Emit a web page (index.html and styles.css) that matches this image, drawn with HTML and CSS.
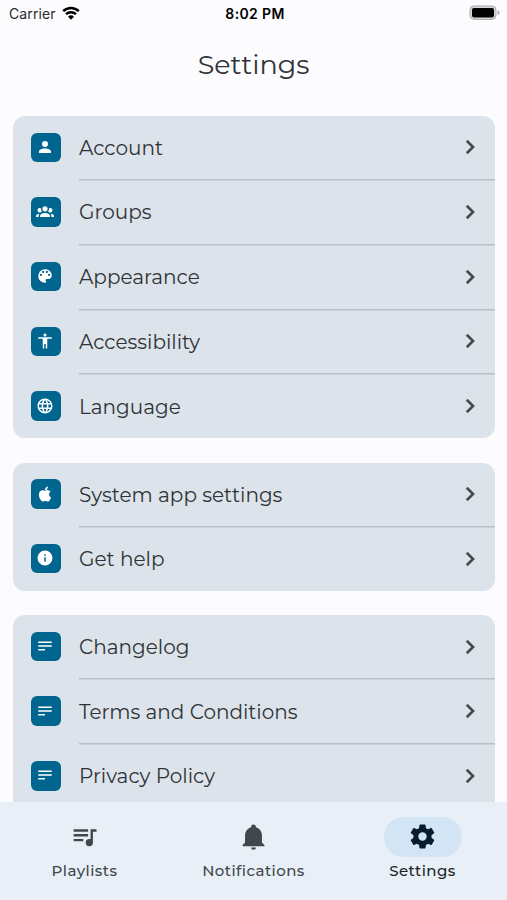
FILE: index.html
```html
<!DOCTYPE html>
<html lang="en">
<head>
    <meta charset="UTF-8">
    <meta name="viewport" content="width=device-width, initial-scale=1.0">
    <title>Settings</title>
    <link rel="stylesheet" href="styles.css">
</head>
<body>
    <div class="app">
        <header class="status-bar">
            <div class="carrier">
                <span>Carrier</span>
                <svg class="wifi" viewBox="0 0 18 14">
                    <path d="M1.2 5.2A11.2 11.2 0 0 1 16.8 5.2M4 8.2A7.1 7.1 0 0 1 14 8.2" fill="none" stroke="#000" stroke-width="2.5"/>
                    <path d="M9 13.8L6 10.7A4.3 4.3 0 0 1 12 10.7Z"/>
                </svg>
            </div>
            <span class="time">8:02 PM</span>
            <svg class="battery" viewBox="0 0 32 16">
                <rect x="1" y="1" width="26" height="13.4" rx="4" fill="#d8d8da" stroke="#a9a9ab"/>
                <rect x="3" y="3" width="22" height="9.5" rx="2"/>
                <path d="M28.6 5.2Q30.6 6 30.6 7.7T28.6 10.2Z" fill="#a9a9ab"/>
            </svg>
        </header>

        <h1 class="title">Settings</h1>

        <main class="content">
            <section class="card">
                <a class="row">
                    <span class="icon"><svg viewBox="0 0 24 24"><path d="M12,4A4,4 0 0,1 16,8A4,4 0 0,1 12,12A4,4 0 0,1 8,8A4,4 0 0,1 12,4M12,14C16.42,14 20,15.79 20,18V20H4V18C4,15.79 7.58,14 12,14Z"/></svg></span>
                    <span class="label">Account</span>
                    <svg class="chevron" viewBox="0 0 24 24"><path d="M8.59,16.58L13.17,12L8.59,7.41L10,6L16,12L10,18L8.59,16.58Z"/></svg>
                </a>
                <a class="row">
                    <span class="icon"><svg viewBox="0 0 24 24"><path d="M12,5.5A3.5,3.5 0 0,1 15.5,9A3.5,3.5 0 0,1 12,12.5A3.5,3.5 0 0,1 8.5,9A3.5,3.5 0 0,1 12,5.5M5,8C5.56,8 6.08,8.15 6.53,8.42C6.38,9.85 6.8,11.27 7.66,12.38C7.16,13.34 6.16,14 5,14A3,3 0 0,1 2,11A3,3 0 0,1 5,8M19,8A3,3 0 0,1 22,11A3,3 0 0,1 19,14C17.84,14 16.84,13.34 16.34,12.38C17.2,11.27 17.62,9.85 17.47,8.42C17.92,8.15 18.44,8 19,8M5.5,18.25C5.5,16.18 8.41,14.5 12,14.5C15.59,14.5 18.5,16.18 18.5,18.25V20H5.5V18.25M0,20V18.5C0,17.11 1.89,15.94 4.45,15.6C3.86,16.28 3.5,17.22 3.5,18.25V20H0M24,20H20.5V18.25C20.5,17.22 20.14,16.28 19.55,15.6C22.11,15.94 24,17.11 24,18.5V20Z"/></svg></span>
                    <span class="label">Groups</span>
                    <svg class="chevron" viewBox="0 0 24 24"><path d="M8.59,16.58L13.17,12L8.59,7.41L10,6L16,12L10,18L8.59,16.58Z"/></svg>
                </a>
                <a class="row">
                    <span class="icon"><svg viewBox="0 0 24 24"><path d="M17.5,12A1.5,1.5 0 0,1 16,10.5A1.5,1.5 0 0,1 17.5,9A1.5,1.5 0 0,1 19,10.5A1.5,1.5 0 0,1 17.5,12M14.5,8A1.5,1.5 0 0,1 13,6.5A1.5,1.5 0 0,1 14.5,5A1.5,1.5 0 0,1 16,6.5A1.5,1.5 0 0,1 14.5,8M9.5,8A1.5,1.5 0 0,1 8,6.5A1.5,1.5 0 0,1 9.5,5A1.5,1.5 0 0,1 11,6.5A1.5,1.5 0 0,1 9.5,8M6.5,12A1.5,1.5 0 0,1 5,10.5A1.5,1.5 0 0,1 6.5,9A1.5,1.5 0 0,1 8,10.5A1.5,1.5 0 0,1 6.5,12M12,3A9,9 0 0,0 3,12A9,9 0 0,0 12,21A1.5,1.5 0 0,0 13.5,19.5C13.5,19.11 13.35,18.76 13.11,18.5C12.88,18.23 12.73,17.88 12.73,17.5A1.5,1.5 0 0,1 14.23,16H16A5,5 0 0,0 21,11C21,6.58 16.97,3 12,3Z"/></svg></span>
                    <span class="label">Appearance</span>
                    <svg class="chevron" viewBox="0 0 24 24"><path d="M8.59,16.58L13.17,12L8.59,7.41L10,6L16,12L10,18L8.59,16.58Z"/></svg>
                </a>
                <a class="row">
                    <span class="icon"><svg viewBox="0 0 24 24"><path d="M21,9H15V22H13V16H11V22H9V9H3V7H21V9M12,2A2,2 0 0,1 14,4A2,2 0 0,1 12,6C10.89,6 10,5.1 10,4C10,2.89 10.89,2 12,2Z"/></svg></span>
                    <span class="label">Accessibility</span>
                    <svg class="chevron" viewBox="0 0 24 24"><path d="M8.59,16.58L13.17,12L8.59,7.41L10,6L16,12L10,18L8.59,16.58Z"/></svg>
                </a>
                <a class="row">
                    <span class="icon"><svg viewBox="0 0 24 24"><path d="M16.36,14C16.44,13.34 16.5,12.68 16.5,12C16.5,11.32 16.44,10.66 16.36,10H19.74C19.9,10.64 20,11.31 20,12C20,12.69 19.9,13.36 19.74,14M14.59,19.56C15.19,18.45 15.65,17.25 15.97,16H18.92C17.96,17.65 16.43,18.93 14.59,19.56M14.34,14H9.66C9.56,13.34 9.5,12.68 9.5,12C9.5,11.32 9.56,10.65 9.66,10H14.34C14.43,10.65 14.5,11.32 14.5,12C14.5,12.68 14.43,13.34 14.34,14M12,19.96C11.17,18.76 10.5,17.43 10.09,16H13.91C13.5,17.43 12.83,18.76 12,19.96M8,8H5.08C6.03,6.34 7.57,5.06 9.4,4.44C8.8,5.55 8.35,6.75 8,8M5.08,16H8C8.35,17.25 8.8,18.45 9.4,19.56C7.57,18.93 6.03,17.65 5.08,16M4.26,14C4.1,13.36 4,12.69 4,12C4,11.31 4.1,10.64 4.26,10H7.64C7.56,10.66 7.5,11.32 7.5,12C7.5,12.68 7.56,13.34 7.64,14M12,4.03C12.83,5.23 13.5,6.57 13.91,8H10.09C10.5,6.57 11.17,5.23 12,4.03M18.92,8H15.97C15.65,6.75 15.19,5.55 14.59,4.44C16.43,5.07 17.96,6.34 18.92,8M12,2C6.47,2 2,6.5 2,12A10,10 0 0,0 12,22A10,10 0 0,0 22,12A10,10 0 0,0 12,2Z"/></svg></span>
                    <span class="label">Language</span>
                    <svg class="chevron" viewBox="0 0 24 24"><path d="M8.59,16.58L13.17,12L8.59,7.41L10,6L16,12L10,18L8.59,16.58Z"/></svg>
                </a>
            </section>

            <section class="card">
                <a class="row">
                    <span class="icon"><svg viewBox="0 0 24 24"><path d="M18.71,19.5C17.88,20.74 17,21.95 15.66,21.97C14.32,22 13.89,21.18 12.37,21.18C10.84,21.18 10.37,21.95 9.1,22C7.79,22.05 6.8,20.68 5.96,19.47C4.25,17 2.94,12.45 4.7,9.39C5.57,7.87 7.13,6.91 8.82,6.88C10.1,6.86 11.32,7.75 12.11,7.75C12.89,7.75 14.37,6.68 15.92,6.84C16.57,6.87 18.39,7.1 19.56,8.82C19.47,8.88 17.39,10.1 17.41,12.63C17.44,15.65 20.06,16.66 20.09,16.67C20.06,16.74 19.67,18.11 18.71,19.5M13,3.5C13.73,2.67 14.94,2.04 15.94,2C16.07,3.17 15.6,4.35 14.9,5.19C14.21,6.04 13.07,6.7 11.95,6.61C11.8,5.46 12.36,4.26 13,3.5Z"/></svg></span>
                    <span class="label">System app settings</span>
                    <svg class="chevron" viewBox="0 0 24 24"><path d="M8.59,16.58L13.17,12L8.59,7.41L10,6L16,12L10,18L8.59,16.58Z"/></svg>
                </a>
                <a class="row">
                    <span class="icon"><svg viewBox="0 0 24 24"><path d="M13,9H11V7H13M13,17H11V11H13M12,2A10,10 0 0,0 2,12A10,10 0 0,0 12,22A10,10 0 0,0 22,12A10,10 0 0,0 12,2Z"/></svg></span>
                    <span class="label">Get help</span>
                    <svg class="chevron" viewBox="0 0 24 24"><path d="M8.59,16.58L13.17,12L8.59,7.41L10,6L16,12L10,18L8.59,16.58Z"/></svg>
                </a>
            </section>

            <section class="card">
                <a class="row">
                    <span class="icon"><svg viewBox="0 0 24 24"><path d="M21,6V8H3V6H21M3,18H12V16H3V18M3,13H21V11H3V13Z"/></svg></span>
                    <span class="label">Changelog</span>
                    <svg class="chevron" viewBox="0 0 24 24"><path d="M8.59,16.58L13.17,12L8.59,7.41L10,6L16,12L10,18L8.59,16.58Z"/></svg>
                </a>
                <a class="row">
                    <span class="icon"><svg viewBox="0 0 24 24"><path d="M21,6V8H3V6H21M3,18H12V16H3V18M3,13H21V11H3V13Z"/></svg></span>
                    <span class="label">Terms and Conditions</span>
                    <svg class="chevron" viewBox="0 0 24 24"><path d="M8.59,16.58L13.17,12L8.59,7.41L10,6L16,12L10,18L8.59,16.58Z"/></svg>
                </a>
                <a class="row">
                    <span class="icon"><svg viewBox="0 0 24 24"><path d="M21,6V8H3V6H21M3,18H12V16H3V18M3,13H21V11H3V13Z"/></svg></span>
                    <span class="label">Privacy Policy</span>
                    <svg class="chevron" viewBox="0 0 24 24"><path d="M8.59,16.58L13.17,12L8.59,7.41L10,6L16,12L10,18L8.59,16.58Z"/></svg>
                </a>
            </section>
        </main>

        <nav class="tabs">
            <a class="tab">
                <span class="pill"><svg viewBox="0 0 24 24"><path d="M15,6H3V8H15V6M15,10H3V12H15V10M3,16H11V14H3V16M17,6V14.18C16.69,14.07 16.35,14 16,14A3,3 0 0,0 13,17A3,3 0 0,0 16,20A3,3 0 0,0 19,17V8H22V6H17Z"/></svg></span>
                <span class="tab-label">Playlists</span>
            </a>
            <a class="tab">
                <span class="pill"><svg viewBox="0 0 24 24"><path d="M21,19V20H3V19L5,17V11C5,7.9 7.03,5.17 10,4.29C10,4.19 10,4.1 10,4A2,2 0 0,1 12,2A2,2 0 0,1 14,4C14,4.1 14,4.19 14,4.29C16.97,5.17 19,7.9 19,11V17L21,19M14,21A2,2 0 0,1 12,23A2,2 0 0,1 10,21"/></svg></span>
                <span class="tab-label">Notifications</span>
            </a>
            <a class="tab active">
                <span class="pill"><svg viewBox="0 0 24 24"><path d="M12,15.5A3.5,3.5 0 0,1 8.5,12A3.5,3.5 0 0,1 12,8.5A3.5,3.5 0 0,1 15.5,12A3.5,3.5 0 0,1 12,15.5M19.43,12.97C19.47,12.65 19.5,12.33 19.5,12C19.5,11.67 19.47,11.34 19.43,11L21.54,9.37C21.73,9.22 21.78,8.95 21.66,8.73L19.66,5.27C19.54,5.05 19.27,4.96 19.05,5.05L16.56,6.05C16.04,5.66 15.5,5.32 14.87,5.07L14.5,2.42C14.46,2.18 14.25,2 14,2H10C9.75,2 9.54,2.18 9.5,2.42L9.13,5.07C8.5,5.32 7.96,5.66 7.44,6.05L4.95,5.05C4.73,4.96 4.46,5.05 4.34,5.27L2.34,8.73C2.21,8.95 2.27,9.22 2.46,9.37L4.57,11C4.53,11.34 4.5,11.67 4.5,12C4.5,12.33 4.53,12.65 4.57,12.97L2.46,14.63C2.27,14.78 2.21,15.05 2.34,15.27L4.34,18.73C4.46,18.95 4.73,19.03 4.95,18.95L7.44,17.94C7.96,18.34 8.5,18.68 9.13,18.93L9.5,21.58C9.54,21.82 9.75,22 10,22H14C14.25,22 14.46,21.82 14.5,21.58L14.87,18.93C15.5,18.67 16.04,18.34 16.56,17.94L19.05,18.95C19.27,19.03 19.54,18.95 19.66,18.73L21.66,15.27C21.78,15.05 21.73,14.78 21.54,14.63L19.43,12.97Z"/></svg></span>
                <span class="tab-label">Settings</span>
            </a>
        </nav>
    </div>
</body>
</html>
```
FILE: styles.css
```css
* {
    box-sizing: border-box;
}

body {
    margin: 0;
    font-family: Montserrat, Inter, sans-serif;
    background-color: #fcfcff;
    color: #2f3337;
}

.app {
    display: flex;
    flex-direction: column;
    height: 900px;
    overflow: hidden;
}

.status-bar {
    display: grid;
    grid-template-columns: 1fr auto 1fr;
    align-items: center;
    height: 28px;
    padding: 0 6px 2px 9px;
    font-family: Inter, sans-serif;
    font-size: 14px;
    color: #000;
}

.carrier {
    display: flex;
    align-items: center;
    gap: 6px;
    letter-spacing: 0.1px;
    color: #2a2a2c;
}

.wifi {
    width: 18px;
    height: 14px;
}

.time {
    font-weight: 600;
    letter-spacing: 0.35px;
}

.battery {
    width: 32px;
    height: 16px;
    justify-self: end;
}

.title {
    margin: 0;
    height: 87.75px;
    flex: none;
    line-height: 74px;
    text-align: center;
    font-size: 27px;
    font-weight: 400;
}

.content {
    flex: 1;
    min-height: 0;
    overflow: hidden;
    padding: 0 12.5px 0 13px;
}

.card {
    margin-bottom: 24.5px;
    background-color: #dce3ea;
    border-radius: 12px;
}

/* the last card runs on under the tab bar */
.card:last-child {
    padding-bottom: 24px;
}

.row {
    display: grid;
    grid-template-columns: 29.5px 1fr 28px;
    align-items: center;
    column-gap: 18.5px;
    height: 63.25px;
    padding: 0 11px 0 18px;
}

/* divider starts at the label and runs to the card edge */
.row + .row {
    height: 64.75px;
    border-top: 1.5px solid transparent;
    background: linear-gradient(#b9bfc9, #b9bfc9) 66px 0 / 100% 1.5px no-repeat border-box;
}

.icon {
    display: flex;
    align-items: center;
    justify-content: center;
    height: 29.5px;
    border-radius: 6px;
    background-color: #00658f;
}

.icon svg {
    width: 18px;
    height: 18px;
    fill: #fff;
    margin: 0 1px 1px 0;
}

.label {
    padding-top: 1px;
    font-size: 20px;
    white-space: nowrap;
}

.chevron {
    width: 28px;
    height: 28px;
    fill: #41474d;
    stroke: #41474d;
    stroke-width: 0.3;
}

.tabs {
    display: grid;
    grid-template-columns: repeat(3, 1fr);
    flex: none;
    height: 98px;
    padding-top: 15px;
    background-color: #e8eff6;
}

.tab {
    display: flex;
    flex-direction: column;
    align-items: center;
    gap: 4px;
    color: #41484d;
}

.pill {
    display: flex;
    align-items: center;
    justify-content: center;
    width: 78px;
    height: 39.5px;
    border-radius: 20px;
}

.pill svg {
    width: 29px;
    height: 29px;
    fill: currentColor;
}

.tab-label {
    font-size: 15px;
    line-height: 20px;
    font-weight: 500;
    letter-spacing: 0.45px;
}

.active {
    color: #1c2228;
}

.active .pill {
    color: #071d2c;
    background-color: #d3e5f5;
}
```
